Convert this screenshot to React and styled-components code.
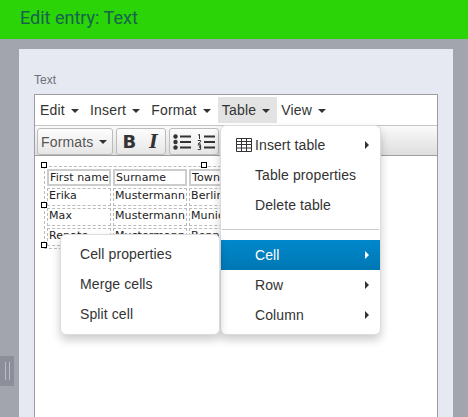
import React from 'react';
import styled, { createGlobalStyle } from 'styled-components';

const MAIN_MENU = ['Edit', 'Insert', 'Format', 'Table', 'View'];

const TABLE_ITEMS = [
  { label: 'Insert table', icon: true, arrow: true },
  { label: 'Table properties' },
  { label: 'Delete table' },
  { divider: true },
  { label: 'Cell', arrow: true, active: true },
  { label: 'Row', arrow: true },
  { label: 'Column', arrow: true },
];

const CELL_ITEMS = ['Cell properties', 'Merge cells', 'Split cell'];

const ROWS = [
  ['Erika', 'Mustermann', 'Berlin'],
  ['Max', 'Mustermann', 'Munich'],
  ['Renate', 'Mustermann', 'Bonn'],
];

export default function App() {
  return (
    <Page>
      <GlobalStyle />
      <Header>Edit entry: Text</Header>
      <Body>
        <SideHandle>
          <HandleLine />
          <HandleLine />
        </SideHandle>
        <Panel>
          <FieldLabel>Text</FieldLabel>
          <Editor>
            <MenuBar>
              {MAIN_MENU.map((item) => (
                <MenuButton key={item} $open={item === 'Table'}>
                  {item}
                  <Caret />
                </MenuButton>
              ))}
            </MenuBar>
            <ToolBar>
              <ToolGroup>
                <FormatsButton>
                  Formats
                  <Caret />
                </FormatsButton>
              </ToolGroup>
              <ToolGroup>
                <IconButton>
                  <BoldGlyph>B</BoldGlyph>
                </IconButton>
                <IconButton>
                  <ItalicGlyph>I</ItalicGlyph>
                </IconButton>
              </ToolGroup>
              <ToolGroup>
                <IconButton>
                  <BulletIcon />
                </IconButton>
                <IconButton>
                  <NumberIcon />
                </IconButton>
              </ToolGroup>
            </ToolBar>
            <Content>
              <DataTable>
                <thead>
                  <tr>
                    <HeadCell $width={64}>First name</HeadCell>
                    <HeadCell $width={74}>Surname</HeadCell>
                    <HeadCell $width={74}>Town</HeadCell>
                  </tr>
                </thead>
                <tbody>
                  {ROWS.map((row) => (
                    <tr key={row[0]}>
                      {row.map((cell) => (
                        <DataCell key={cell}>{cell}</DataCell>
                      ))}
                    </tr>
                  ))}
                </tbody>
              </DataTable>
              <ResizeHandle $left={6} $top={6} />
              <ResizeHandle $left={166} $top={6} />
              <ResizeHandle $left={6} $top={46} />
              <ResizeHandle $left={6} $top={86} />
            </Content>
            <TableMenu>
              {TABLE_ITEMS.map((item, index) =>
                item.divider ? (
                  <Divider key={index} />
                ) : (
                  <MenuItem key={item.label} $active={item.active}>
                    {item.icon && <GridIcon />}
                    {item.label}
                    {item.arrow && <SubArrow $active={item.active} />}
                  </MenuItem>
                ),
              )}
            </TableMenu>
            <CellMenu>
              {CELL_ITEMS.map((item) => (
                <MenuItem key={item}>{item}</MenuItem>
              ))}
            </CellMenu>
          </Editor>
        </Panel>
      </Body>
    </Page>
  );
}

function GridIcon() {
  return (
    <GridSvg viewBox="0 0 16 14" width="16" height="14">
      <path
        d="M.5.5h15v13H.5zM.5 3.5h15M.5 6.5h15M.5 10h15M5.5.5v13M10.5.5v13"
        fill="none"
        stroke="#333"
      />
    </GridSvg>
  );
}

function BulletIcon() {
  return (
    <svg viewBox="0 0 18 16" width="18" height="16">
      <circle cx="2.5" cy="2.5" r="2.2" fill="#333" />
      <circle cx="2.5" cy="8" r="2.2" fill="#333" />
      <circle cx="2.5" cy="13.5" r="2.2" fill="#333" />
      <path d="M7 2.5h11M7 8h11M7 13.5h11" stroke="#333" strokeWidth="2" />
    </svg>
  );
}

function NumberIcon() {
  return (
    <svg viewBox="0 0 18 16" width="18" height="16">
      <path
        d="M1 1l1.5-.6V5M.8 6.5h2.8v1.2L1 10h2.8M.8 11h2.8v2H2h1.6v2.6H.8"
        fill="none"
        stroke="#333"
      />
      <path d="M7 2.5h11M7 8h11M7 13.5h11" stroke="#333" strokeWidth="2" />
    </svg>
  );
}

const GlobalStyle = createGlobalStyle`
  html, body {
    margin: 0;
    height: 100%;
    overflow: hidden;
  }
  body {
    background: #a2a5ae;
    font-family: "Liberation Sans", Arial, sans-serif;
  }
`;

const Page = styled.div`
  display: flex;
  flex-direction: column;
  height: 417px;
  overflow: hidden;
`;

const Header = styled.header`
  flex: none;
  box-sizing: border-box;
  height: 39px;
  padding: 6px 0 0 20px;
  background: #2ad406;
  color: #17634f;
  font-family: Roboto, sans-serif;
  font-size: 18px;
  line-height: 24px;
`;

const Body = styled.div`
  position: relative;
  flex: 1;
  display: flex;
  padding: 10px 15px 0 19px;
  min-height: 0;
`;

const SideHandle = styled.div`
  position: absolute;
  left: 0;
  top: 317px;
  display: flex;
  justify-content: center;
  gap: 3px;
  box-sizing: border-box;
  width: 14px;
  height: 30px;
  padding-top: 6px;
  background: #8c8f9a;
`;

const HandleLine = styled.span`
  width: 1px;
  height: 18px;
  background: #b9bcc4;
`;

const Panel = styled.main`
  flex: 1;
  display: flex;
  flex-direction: column;
  padding: 23px 15px 0;
  background: #e6e9f2;
`;

const FieldLabel = styled.label`
  height: 22px;
  color: #6f7078;
  font-size: 12px;
  line-height: 16px;
`;

const Editor = styled.div`
  position: relative;
  flex: 1;
  display: flex;
  flex-direction: column;
  border: 1px solid #9e9e9e;
  border-bottom: 0;
  background: #fff;
`;

const MenuBar = styled.nav`
  flex: none;
  display: flex;
  box-sizing: border-box;
  height: 31px;
  padding: 2px 0 0 1px;
  border-bottom: 1px solid #c5c5c5;
  background: #fff;
`;

const MenuButton = styled.div`
  display: flex;
  align-items: center;
  gap: 6px;
  height: 26px;
  padding: 0 7px 0 4px;
  background: ${({ $open }) => ($open ? '#e3e3e3' : 'transparent')};
  color: #333;
  font-size: 14px;
  letter-spacing: 0.2px;
`;

const Caret = styled.span`
  width: 0;
  height: 0;
  margin-top: 1px;
  border-top: 4px solid #333;
  border-left: 4px solid transparent;
  border-right: 4px solid transparent;
`;

const ToolBar = styled.div`
  flex: none;
  display: flex;
  gap: 3px;
  box-sizing: border-box;
  height: 30px;
  padding: 2px 0 0 2px;
  border-bottom: 1px solid #9e9e9e;
  background: linear-gradient(#fafafa, #dedede);
`;

const ToolGroup = styled.div`
  display: flex;
  height: 25px;
  border: 1px solid #bcbcbc;
  border-radius: 3px;
  background: linear-gradient(#fdfdfd, #e6e6e6);
`;

const FormatsButton = styled.div`
  display: flex;
  align-items: center;
  gap: 6px;
  padding: 0 5px 0 3px;
  color: #555;
  font-size: 14px;
  letter-spacing: 0.15px;
`;

const IconButton = styled.div`
  display: flex;
  align-items: center;
  justify-content: center;
  width: 24px;
`;

const BoldGlyph = styled.span`
  color: #333;
  font-size: 18px;
  font-weight: 700;
  font-family: "DejaVu Sans", sans-serif;
`;

const ItalicGlyph = styled(BoldGlyph)`
  font-style: italic;
  font-family: "DejaVu Serif", serif;
`;

const Content = styled.div`
  position: relative;
  flex: 1;
  padding: 10px 0 0 9px;
  overflow: hidden;
`;

const DataTable = styled.table`
  table-layout: fixed;
  width: 222px;
  border: 1px dashed #bbb;
  border-spacing: 2px 2px;
  color: #222;
  font-family: "DejaVu Sans", sans-serif;
  font-size: 11px;
  letter-spacing: 0.1px;
`;

const HeadCell = styled.th`
  box-sizing: border-box;
  width: ${({ $width }) => $width}px;
  height: 17px;
  padding: 0 1px;
  border: 2px solid #cccccc;
  font-weight: 400;
  line-height: 12px;
  text-align: left;
  white-space: nowrap;
  overflow: hidden;
`;

const DataCell = styled.td`
  box-sizing: border-box;
  height: 18px;
  padding: 0 1px 2px;
  border: 1px dashed #bbb;
  line-height: 14px;
  white-space: nowrap;
  overflow: hidden;
`;

const ResizeHandle = styled.span`
  position: absolute;
  left: ${({ $left }) => $left}px;
  top: ${({ $top }) => $top}px;
  box-sizing: border-box;
  width: 6px;
  height: 6px;
  border: 1px solid #000;
  background: #fff;
`;

const Dropdown = styled.div`
  position: absolute;
  box-sizing: border-box;
  display: flex;
  flex-direction: column;
  padding: 4px 0 6px;
  border: 1px solid #dcdcdc;
  border-radius: 6px;
  background: #fff;
  box-shadow: 0 5px 10px rgba(0, 0, 0, 0.2);
`;

const TableMenu = styled(Dropdown)`
  left: 185px;
  top: 30px;
  width: 161px;
  height: 210px;
`;

const CellMenu = styled(Dropdown)`
  left: 25px;
  top: 139px;
  width: 160px;
  height: 101px;
`;

const MenuItem = styled.div`
  position: relative;
  display: flex;
  align-items: center;
  flex: none;
  box-sizing: border-box;
  height: 30px;
  padding-left: 34px;
  background: ${({ $active }) =>
    $active ? 'linear-gradient(#0088cc, #0077b3)' : 'transparent'};
  color: ${({ $active }) => ($active ? '#fff' : '#333')};
  font-size: 14px;
  letter-spacing: 0.1px;
  ${CellMenu} & {
    padding-left: 19px;
  }
`;

const GridSvg = styled.svg`
  position: absolute;
  left: 15px;
  top: 8px;
`;

const SubArrow = styled.span`
  position: absolute;
  right: 11px;
  top: 11px;
  width: 0;
  height: 0;
  border-left: 4px solid ${({ $active }) => ($active ? '#fff' : '#333')};
  border-top: 4px solid transparent;
  border-bottom: 4px solid transparent;
`;

const Divider = styled.div`
  flex: none;
  height: 1px;
  margin: 9px 1px 10px;
  background: #cbcbcb;
`;
